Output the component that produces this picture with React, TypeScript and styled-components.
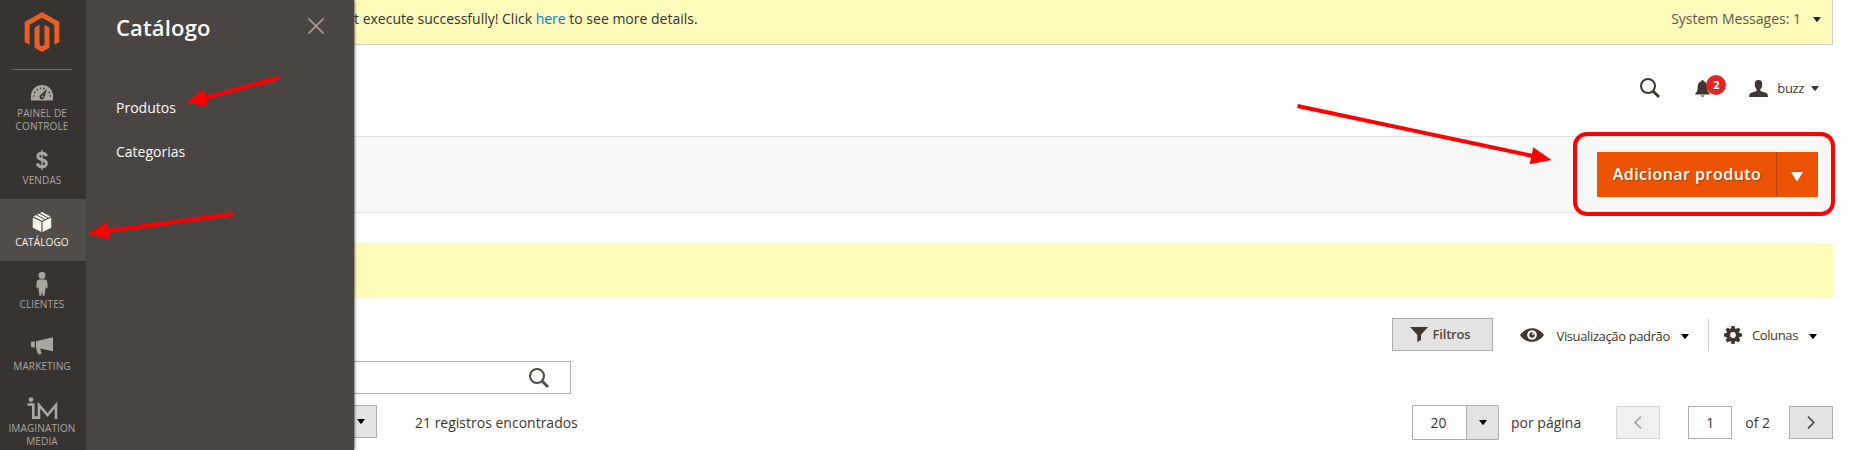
import React from "react";
import styled, { createGlobalStyle, css } from "styled-components";
import { FaMagento } from "react-icons/fa";

const GlobalStyle = createGlobalStyle`
  *, *::before, *::after { box-sizing: border-box; }
  body {
    margin: 0;
    background: #fff;
    color: #41362f;
    font-family: "Open Sans", "Noto Sans", sans-serif;
    font-size: 14px;
    overflow: hidden;
  }
  svg { display: block; flex: none; }
`;

const Page = styled.div`
  position: relative;
  display: flex;
  width: 1859px;
  height: 450px;
  overflow: hidden;
`;

const Sidebar = styled.nav`
  flex: none;
  position: relative;
  z-index: 3;
  width: 86px;
  background: #373330;
`;

const Brand = styled.div`
  height: 70px;
  margin: 0 14px 0 12px;
  padding-top: 12px;
  border-bottom: 1px solid #736963;
  display: flex;
  justify-content: center;
  color: #eb5f27;
`;

const NavItem = styled.a<{ $height?: number; $active?: boolean }>`
  display: flex;
  flex-direction: column;
  align-items: center;
  height: ${(p) => p.$height ?? 62}px;
  padding-right: 2px;
  color: ${(p) => (p.$active ? "#f7f3eb" : "#aaa6a0")};
  background: ${(p) => (p.$active ? "#524d49" : "transparent")};
`;

const NavIcon = styled.span`
  height: 36px;
  display: flex;
  align-items: center;
  padding-top: 10px;
`;

const NavLabel = styled.span`
  width: 96px;
  transform: scaleX(0.915);
  font-size: 11px;
  letter-spacing: 0.1px;
  line-height: 13px;
  text-align: center;
  text-transform: uppercase;
  white-space: pre-line;
`;

const Flyout = styled.section`
  flex: none;
  position: relative;
  z-index: 2;
  width: 268px;
  padding: 0 30px;
  background: #4a4542;
  box-shadow: 0 0 3px #000;
`;

const FlyoutHead = styled.div`
  display: flex;
  justify-content: space-between;
  align-items: center;
  height: 52px;
  color: #fff;
`;

const FlyoutTitle = styled.h2`
  margin: 2px 0 0;
  font-size: 22px;
  line-height: 30px;
  font-weight: 560;
  letter-spacing: 0.15px;
`;

const FlyoutLink = styled.a`
  display: block;
  height: 44px;
  line-height: 20px;
  color: #fcfcfc;
`;

const FlyoutLinks = styled.div`
  padding-top: 46px;
`;

const Main = styled.main`
  flex: 1;
  min-width: 0;
  padding-right: 26px;
`;

const SystemBar = styled.div`
  display: flex;
  justify-content: space-between;
  align-items: flex-start;
  height: 45px;
  padding: 9px 11px 0 0;
  line-height: 20px;
  background: #fffbbb;
  border: solid #ccc;
  border-width: 0 1px 1px 0;
  white-space: nowrap;
`;

const Link = styled.a`
  color: #007bdb;
`;

const Text = styled.span<{ $small?: boolean; $color?: string }>`
  font-size: ${(p) => (p.$small ? 13 : 14)}px;
  letter-spacing: ${(p) => (p.$small ? -0.37 : 0)}px;
  color: ${(p) => p.$color ?? "#41362f"};
  white-space: nowrap;
`;

const Inline = styled.div<{ $gap?: number; $height?: number }>`
  display: flex;
  align-items: center;
  height: ${(p) => p.$height ?? 20}px;
  gap: ${(p) => p.$gap ?? 0}px;
`;

const Header = styled.header`
  display: flex;
  justify-content: flex-end;
  align-items: center;
  height: 91px;
  padding: 0 14px 5px 0;
`;

const Bell = styled.div`
  position: relative;
  margin: 0 39px 0 35px;
`;

const Badge = styled.span`
  position: absolute;
  left: 11px;
  top: -5px;
  width: 20px;
  height: 20px;
  border-radius: 50%;
  background: #e22626;
  color: #fff;
  font-size: 11px;
  font-weight: 700;
  line-height: 20px;
  text-align: center;
`;

const PageActions = styled.div`
  display: flex;
  justify-content: flex-end;
  height: 77px;
  padding: 15px 15px 0 0;
  background: #f8f8f8;
  border: solid #e3e3e3;
  border-width: 1px 0;
`;

const SplitButton = styled.div`
  position: relative;
  display: flex;
  width: 221px;
  height: 45px;
  background: #eb5202;
  color: #fff;
`;

const SplitLabel = styled.span`
  width: 180px;
  padding-left: 1px;
  border-right: 1px solid #b84002;
  font-size: 16px;
  font-weight: 560;
  letter-spacing: 0.48px;
  line-height: 45px;
  text-align: center;
  text-shadow: 1px 1px 0 rgba(0, 0, 0, 0.25);
  white-space: nowrap;
`;

const SplitToggle = styled.span`
  flex: 1;
  display: flex;
  justify-content: center;
  align-items: center;
  padding: 4px 1px 0 0;
`;

const Highlight = styled.div`
  position: absolute;
  left: -24px;
  top: -20px;
  width: 262px;
  height: 84px;
  border: 4px solid #f00;
  border-radius: 14px;
`;

const Notice = styled.div`
  height: 55px;
  margin-top: 30px;
  background: #fffbbb;
`;

const GridTools = styled.div`
  display: flex;
  justify-content: flex-end;
  align-items: center;
  height: 33px;
  margin-top: 20px;
  padding-right: 16px;
`;

const CaretSlot = styled.span`
  padding-top: 3px;
`;

const ViewName = styled.span`
  padding-top: 2px;
`;

const control = css`
  display: flex;
  justify-content: center;
  align-items: center;
  height: 33px;
  border: 1px solid #adadad;
`;

const FilterButton = styled.button`
  ${control}
  width: 101px;
  padding: 0 4px 1px 0;
  gap: 5px;
  background: #e3e3e3;
  color: #514943;
  font: 600 13px "Open Sans", sans-serif;
  letter-spacing: -0.2px;
  margin-right: 27px;
`;

const Divider = styled.span`
  width: 1px;
  height: 32px;
  margin: 0 15px 0 19px;
  background: #ccc;
`;

const SearchField = styled.div`
  ${control}
  justify-content: flex-end;
  width: 217px;
  height: 33px;
  margin-top: 10px;
  padding-right: 21px;
  border-left: 0;
  border-radius: 0 1px 1px 0;
`;

const PagerRow = styled.div`
  display: flex;
  align-items: flex-start;
  margin-top: 11px;
`;

const ActionToggle = styled.div`
  ${control}
  width: 23px;
  border-left: 0;
  padding-right: 8px;
  background: #e3e3e3;
  margin-right: 38px;
`;

const Pager = styled.div`
  display: flex;
  align-items: center;
  height: 35px;
  margin-left: auto;
`;

const PageSize = styled.div`
  ${control}
  width: 87px;
  height: 35px;
  border-radius: 1px;
  margin-right: 12px;
`;

const PageSizeValue = styled.span`
  flex: 1;
  text-align: center;
  padding-right: 2px;
`;

const PageSizeToggle = styled.span`
  display: flex;
  justify-content: center;
  align-items: center;
  width: 32px;
  height: 33px;
  border-left: 1px solid #adadad;
  background: #e3e3e3;
`;

const PageBox = styled.div<{ $fill?: string; $faded?: boolean }>`
  ${control}
  width: 44px;
  background: ${(p) => p.$fill ?? "#fff"};
  opacity: ${(p) => (p.$faded ? 0.5 : 1)};
`;

const Gap = styled.span<{ $w: number }>`
  width: ${(p) => p.$w}px;
`;

const Annotations = styled.svg`
  position: absolute;
  inset: 0;
  z-index: 5;
  pointer-events: none;
`;

const Caret = ({ color = "#000", w = 8, h = 5 }: { color?: string; w?: number; h?: number }) => (
  <svg width={w} height={h} viewBox="0 0 8 5" preserveAspectRatio="none">
    <path d="M0 0H8L4.6 4.6Q4 5.2 3.4 4.6Z" fill={color} />
  </svg>
);

const SearchIcon = ({ color }: { color: string }) => (
  <svg width="20" height="20" viewBox="0 0 20 20" fill="none" stroke={color}>
    <circle cx="8" cy="8" r="7" strokeWidth="2" />
    <path d="M13 13L19 19" strokeWidth="2.8" />
  </svg>
);

const GaugeIcon = () => (
  <svg width="22" height="16" viewBox="0 0 22 16">
    <path d="M0 15.5V11A11 11 0 0 1 22 11V15.5Z" fill="currentColor" />
    <g fill="#373330">
      <circle cx="2.8" cy="11" r=".8" />
      <circle cx="3.8" cy="7.4" r=".8" />
      <circle cx="6.4" cy="4.6" r=".8" />
      <circle cx="9.6" cy="3.2" r=".8" />
      <circle cx="13" cy="3.4" r=".8" />
      <circle cx="18.2" cy="7.4" r=".8" />
      <circle cx="19.2" cy="11" r=".8" />
      <path d="M16.2 3.8L13.3 12.2A2.4 2.4 0 1 1 9.8 9.8Z" />
    </g>
    <circle cx="11.4" cy="11.4" r="1" fill="currentColor" />
  </svg>
);

const DollarIcon = () => (
  <svg width="12" height="20" viewBox="0 0 12 20" fill="none" stroke="currentColor">
    <path d="M10.3 6.2C10 4 8.3 3.2 6 3.2C3.5 3.2 1.8 4.4 1.8 6.3C1.8 11 10.4 8.5 10.4 13.3C10.4 15.5 8.6 16.8 6 16.8C3.4 16.8 1.7 15.6 1.4 13.2" strokeWidth="2.9" />
    <path d="M6 0V20" strokeWidth="1.5" />
  </svg>
);

const BoxIcon = () => (
  <svg width="20" height="20" viewBox="0 0 20 20" fill="currentColor">
    <path d="M.8 5.6L9.4 9.8V20L.8 15.7Z" />
    <path d="M19.2 5.6L10.6 9.8V20L19.2 15.7Z" />
    <path d="M1.4 4.5L10 .1L18.6 4.5L10 8.7Z" />
    <path d="M4 2.6L13 7.6M7 1L16 6" stroke="#524d49" strokeWidth="1" fill="none" />
  </svg>
);

const PersonIcon = () => (
  <svg width="12" height="24" viewBox="0 0 12 24" fill="currentColor">
    <circle cx="6" cy="3.5" r="3.4" />
    <path d="M3 7.6H9Q11.5 8 11.5 12V16L10.2 16.5L9.4 14.5V17.5L8.4 24L6.8 23.5L6 19.5L5.2 23.5L3.6 24L2.6 17.5V14.5L1.8 16.5L.5 16V12Q.5 8 3 7.6Z" />
  </svg>
);

const MegaphoneIcon = () => (
  <svg width="22" height="18" viewBox="0 0 22 18" fill="currentColor">
    <path d="M22 .3V14.2L9 11.6L10.8 16.6L7.2 17.6L5 10.8V4.2Z" />
    <path d="M0 4.7L3.8 4.3V10.4L0 10Z" />
  </svg>
);

const ImIcon = () => (
  <svg width="31" height="22" viewBox="0 0 31 22" fill="none" stroke="currentColor">
    <circle cx="4" cy="2.6" r="2.4" fill="currentColor" stroke="none" />
    <path d="M.5 7.5H6.3V20.6H12V8L20.5 18L29 8V22" strokeWidth="2.6" />
  </svg>
);

const BellIcon = () => (
  <svg width="15" height="17" viewBox="0 0 15 17" fill="#41362f">
    <path d="M6.3 1.2A1.2 1.2 0 0 1 8.7 1.2C11.8 2.2 12.2 5 12.3 8C12.4 11 13.4 12.4 14.6 13V14.4H.4V13C1.6 12.4 2.6 11 2.7 8C2.8 5 3.2 2.2 6.3 1.2Z" />
    <path d="M5.5 15.4H9.5Q7.5 18 5.5 15.4Z" />
  </svg>
);

const UserIcon = () => (
  <svg width="19" height="17" viewBox="0 0 19 17" fill="#41362f">
    <path d="M9.5 0C12 0 13.2 1.5 13.2 4C13.2 6.5 12.6 8.2 11.4 9.3V11L17.5 13Q19 13.8 19 17H0Q0 13.8 1.5 13L7.6 11V9.3C6.4 8.2 5.8 6.5 5.8 4C5.8 1.5 7 0 9.5 0Z" />
  </svg>
);

const FunnelIcon = () => (
  <svg width="18" height="15" viewBox="0 0 18 15" fill="#41362f">
    <path d="M0 0H18L11 7.8V13L7.3 15V7.8Z" />
  </svg>
);

const EyeIcon = () => (
  <svg width="24" height="14" viewBox="0 0 24 14">
    <path d="M0 7C6-2 18-2 24 7C18 16 6 16 0 7Z" fill="#41362f" />
    <circle cx="12" cy="7" r="4.8" fill="#fff" />
    <circle cx="12" cy="7" r="2.7" fill="#41362f" />
    <circle cx="13" cy="6" r="1" fill="#fff" />
  </svg>
);

const GearIcon = () => (
  <svg width="18" height="18" viewBox="-9 -9 18 18" fill="#41362f">
    {[0, 45, 90, 135].map((a) => (
      <path key={a} transform={`rotate(${a})`} d="M-2.2 -6L-1.5 -9H1.5L2.2 -6V6L1.5 9H-1.5L-2.2 6Z" />
    ))}
    <circle r="6.7" />
    <circle r="2.9" fill="#fff" />
  </svg>
);

const Chevron = ({ left = false }: { left?: boolean }) => (
  <svg width="8" height="13" viewBox="0 0 8 13" fill="none" stroke="#514943" strokeWidth="1.7">
    <path d={left ? "M7 .6L1.2 6.5L7 12.4" : "M1 .6L6.8 6.5L1 12.4"} />
  </svg>
);

const Arrow = ({ from, to }: { from: [number, number]; to: [number, number] }) => {
  const angle = Math.atan2(to[1] - from[1], to[0] - from[0]);
  const length = Math.hypot(to[0] - from[0], to[1] - from[1]);
  return (
    <g transform={`translate(${from[0]} ${from[1]}) rotate(${(angle * 180) / Math.PI})`} fill="#f00">
      <rect y="-2" width={length - 18} height="4" />
      <path d={`M${length} 0L${length - 20.5} -8.7V8.7Z`} />
    </g>
  );
};

const navItems = [
  { label: "Painel de\nControle", icon: <GaugeIcon />, height: 67 },
  { label: "Vendas", icon: <DollarIcon /> },
  { label: "Catálogo", icon: <BoxIcon />, active: true },
  { label: "Clientes", icon: <PersonIcon /> },
  { label: "Marketing", icon: <MegaphoneIcon /> },
  { label: "Imagination\nMedia", icon: <ImIcon />, height: 65 },
];

export default function App() {
  return (
    <Page>
      <GlobalStyle />
      <Sidebar>
        <Brand>
          <FaMagento size={40} />
        </Brand>
        {navItems.map((item) => (
          <NavItem key={item.label} $height={item.height} $active={item.active}>
            <NavIcon>{item.icon}</NavIcon>
            <NavLabel>{item.label}</NavLabel>
          </NavItem>
        ))}
      </Sidebar>

      <Flyout>
        <FlyoutHead>
          <FlyoutTitle>Catálogo</FlyoutTitle>
          <svg width="16" height="16" viewBox="0 0 16 16" stroke="#a79d95" strokeWidth="1.6">
            <path d="M.5 .5L15.5 15.5M15.5 .5L.5 15.5" />
          </svg>
        </FlyoutHead>
        <FlyoutLinks>
          <FlyoutLink>Produtos</FlyoutLink>
          <FlyoutLink>Categorias</FlyoutLink>
        </FlyoutLinks>
      </Flyout>

      <Main>
        <SystemBar>
          <Text $color="#333">
            t execute successfully! Click <Link>here</Link> to see more details.
          </Text>
          <Inline $gap={12}>
            <Text $color="#5f564f">System Messages: 1</Text>
            <Caret color="#222" />
          </Inline>
        </SystemBar>

        <Header>
          <SearchIcon color="#41362f" />
          <Bell>
            <BellIcon />
            <Badge>2</Badge>
          </Bell>
          <UserIcon />
          <Gap $w={9} />
          <Text $small>buzz</Text>
          <Gap $w={7} />
          <Caret color="#41362f" />
        </Header>

        <PageActions>
          <SplitButton>
            <SplitLabel>Adicionar produto</SplitLabel>
            <SplitToggle>
              <Caret color="#fff" w={12} h={9} />
            </SplitToggle>
            <Highlight />
          </SplitButton>
        </PageActions>

        <Notice />

        <GridTools>
          <FilterButton>
            <FunnelIcon />
            Filtros
          </FilterButton>
          <EyeIcon />
          <Gap $w={13} />
          <ViewName>
            <Text $small>Visualização padrão</Text>
          </ViewName>
          <Gap $w={11} />
          <CaretSlot>
            <Caret />
          </CaretSlot>
          <Divider />
          <GearIcon />
          <Gap $w={10} />
          <Text $small>Colunas</Text>
          <Gap $w={11} />
          <CaretSlot>
            <Caret />
          </CaretSlot>
        </GridTools>

        <SearchField>
          <SearchIcon color="#514943" />
        </SearchField>

        <PagerRow>
          <ActionToggle>
            <Caret />
          </ActionToggle>
          <Inline $height={34}>
            <Text>21 registros encontrados</Text>
          </Inline>
          <Pager>
            <PageSize>
              <PageSizeValue>20</PageSizeValue>
              <PageSizeToggle>
                <Caret />
              </PageSizeToggle>
            </PageSize>
            <Text>por página</Text>
            <Gap $w={35} />
            <PageBox $fill="#e3e3e3" $faded>
              <Chevron left />
            </PageBox>
            <Gap $w={28} />
            <PageBox>1</PageBox>
            <Gap $w={13} />
            <Text>of 2</Text>
            <Gap $w={19} />
            <PageBox $fill="#e3e3e3">
              <Chevron />
            </PageBox>
          </Pager>
        </PagerRow>
      </Main>

      <Annotations width="1859" height="450">
        <Arrow from={[280, 77.5]} to={[186, 103]} />
        <Arrow from={[233.5, 214]} to={[88, 233.7]} />
        <Arrow from={[1297.5, 106]} to={[1551.5, 160]} />
      </Annotations>
    </Page>
  );
}
